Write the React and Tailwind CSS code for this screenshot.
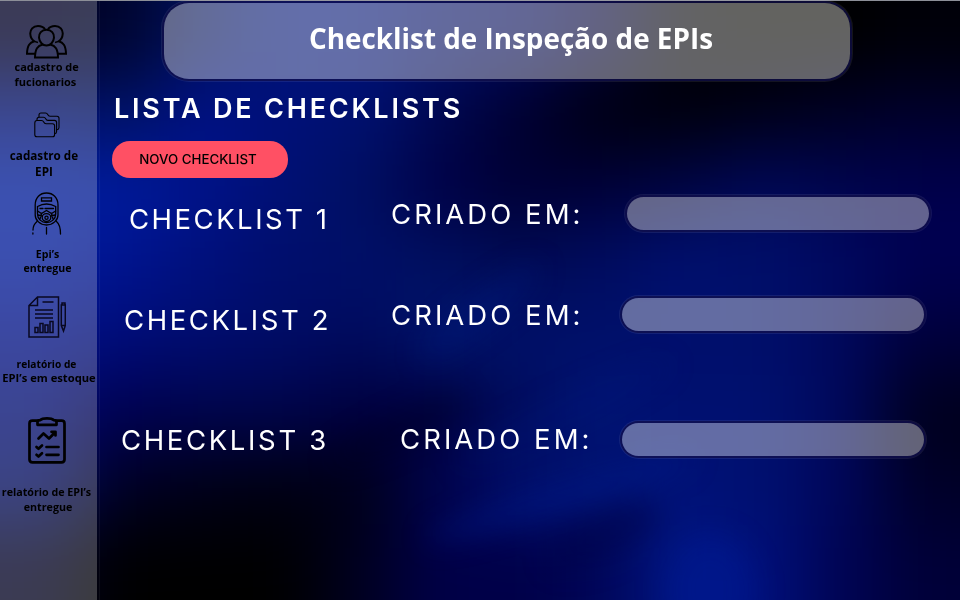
const MESH = [
  ["#000028", "#00052c", "#00105c", "#00137a", "#001278", "#000c66", "#00085c", "#00003c", "#000008", "#000000", "#000000", "#000008"],
  ["#001074", "#001264", "#001184", "#001078", "#001070", "#000850", "#000030", "#000010", "#00000c", "#000018", "#000024", "#00002c"],
  ["#001ea0", "#001b9c", "#00128a", "#001074", "#001062", "#000046", "#000034", "#000038", "#000444", "#000858", "#000550", "#00004c"],
  ["#001a9c", "#001490", "#00107c", "#000d6c", "#000f68", "#001060", "#000b54", "#000c60", "#001070", "#000f6a", "#000860", "#000050"],
  ["#001088", "#000c78", "#000c6e", "#000c66", "#000a5c", "#00146c", "#001068", "#00106a", "#000f6c", "#000f6a", "#00085c", "#00003c"],
  ["#000c74", "#000050", "#00044c", "#00044a", "#00003e", "#00003c", "#000c5c", "#001474", "#001070", "#001070", "#00085c", "#00001c"],
  ["#000c64", "#000024", "#000018", "#000012", "#000018", "#000450", "#001070", "#001270", "#001278", "#001070", "#00065a", "#000028"],
  ["#000024", "#000000", "#000000", "#000000", "#000020", "#000048", "#000048", "#000658", "#001684", "#00107c", "#000454", "#000038"],
];

function Backdrop() {
  return (
    <svg className="absolute inset-0 h-full w-full" viewBox="0 0 960 600" preserveAspectRatio="none" aria-hidden="true">
      <defs>
        <filter id="mesh" x="-20%" y="-20%" width="140%" height="140%" colorInterpolationFilters="sRGB">
          <feGaussianBlur stdDeviation="34" />
        </filter>
        <filter id="soft" x="-50%" y="-50%" width="200%" height="200%" colorInterpolationFilters="sRGB">
          <feGaussianBlur stdDeviation="14" />
        </filter>
      </defs>
      <g filter="url(#mesh)">
        {MESH.map((row, r) =>
          row.map((fill, c) => (
            <rect
              key={`${r}-${c}`}
              x={c === 0 ? -100 : c * 80}
              y={r === 0 ? -100 : r * 75}
              width={c === 0 ? 181 : c === 11 ? 180 : 81}
              height={r === 0 ? 176 : r === 7 ? 180 : 76}
              fill={fill}
            />
          ))
        )}
      </g>
      <g filter="url(#soft)">
        <ellipse cx="480" cy="312" rx="75" ry="14" transform="rotate(-38 480 312)" fill="#001c84" opacity="0.35" />
        <ellipse cx="560" cy="400" rx="120" ry="14" transform="rotate(-25 590 400)" fill="#001a80" opacity="0.2" />
        <ellipse cx="560" cy="498" rx="140" ry="12" transform="rotate(-17 560 498)" fill="#001a8c" opacity="0.5" />
        <ellipse cx="605" cy="535" rx="60" ry="22" transform="rotate(-25 605 535)" fill="#000040" opacity="0.4" />
        <ellipse cx="710" cy="590" rx="45" ry="55" fill="#001c98" opacity="0.4" />
        <ellipse cx="400" cy="430" rx="75" ry="13" transform="rotate(-25 400 430)" fill="#000018" opacity="0.3" />
      </g>
    </svg>
  );
}

function UsersIcon() {
  return (
    <svg className="mt-[24px] h-[34px] w-[41px] shrink-0" viewBox="0 0 41 34" fill="none" stroke="#000" strokeWidth="2">
      <path d="M19 4.300C17 1.300 13.800 1 12 1C7 1 4 4.500 4.300 9C4.500 12.500 6 14.800 8.300 16.300C4 17.600 1.200 20 1 28.800H9.500" />
      <path d="M22 4.300C24 1.300 27.200 1 29 1C34 1 37 4.500 36.700 9C36.500 12.500 35 14.800 32.700 16.300C37 17.600 39.800 20 40 28.800H31.500" />
      <path d="M20.500 4.800C15.500 4.800 12.700 8.300 13 12.700C13.400 17 16.500 20.500 20.500 20.500S27.600 17 28 12.700C28.300 8.300 25.500 4.800 20.500 4.800Z" />
      <path d="M16.800 19.500C11.500 20.800 9.200 24 9 32.500H32C31.800 24 29.500 20.800 24.200 19.500" />
      <path d="M8.300 16.300L12 17.500M32.700 16.300L29 17.500" strokeWidth="1.400" />
    </svg>
  );
}

function FoldersIcon() {
  return (
    <svg className="h-[26px] w-[26px] shrink-0" viewBox="0 0 26 26" fill="none" stroke="#000" strokeWidth="1.100" strokeLinejoin="round">
      <path d="M.8 11Q.8 8.500 3 8.500H7.500Q9 8.500 9.700 10Q10.500 11.700 12 11.700H18.500Q20.600 11.700 20.600 13.800V22.500Q20.600 24.800 18.500 24.800H3Q.8 24.800 .8 22.500Z" />
      <path d="M3 8.500V7.500Q3 5.200 5 5.200H9.500Q11 5.200 11.700 6.700Q12.500 8.400 14 8.400H20.500Q22.600 8.400 22.600 10.500V19.500Q22.600 21.500 20.600 21.800" />
      <path d="M5 5.200V3Q5 1 7 1H11.500Q13 1 13.700 2.500Q14.500 4.200 16 4.200H23Q25 4.200 25 6.300V15.500Q25 17.500 22.800 17.800" />
    </svg>
  );
}

function MaskIcon() {
  return (
    <svg className="h-[43px] w-[30px] shrink-0" viewBox="0 0 30 43" fill="none" stroke="#000" strokeWidth="1.300" strokeLinecap="round">
      <path d="M3.200 23V13C3.200 5.500 8 1 14.500 1S26 5.500 26 13V23C26 28 21 33 14.500 33S3.200 28 3.200 23Z" />
      <path d="M9.500 5.800H19.500V9H9.500Z" />
      <path d="M5.500 14.500Q14.500 9.500 23.700 14.500V22C23.700 27 19.500 30.500 14.500 30.500S5.500 27 5.500 22Z" />
      <path d="M8 16.500H11M13 16.500H21.500M5.500 19L9.500 21.500L14.500 18.500L19.500 21.500L23.700 19" />
      <path d="M9.500 21.500L8 27M19.500 21.500L21 27M10 24L6 23M19 24L23 23" />
      <ellipse cx="14.500" cy="25.500" rx="4.300" ry="3.800" />
      <circle cx="14.500" cy="25.700" r="1.600" />
      <path d="M5 29.500C2 32 1 35 1 38M.9 41V42M24.500 29.500C27.500 32 28.500 35 28.500 42M14.500 35.500V42" />
    </svg>
  );
}

function ReportIcon() {
  return (
    <svg className="h-[42px] w-[38px] shrink-0" viewBox="0 0 38 42" fill="none" stroke="#080820" strokeWidth="1.500">
      <path d="M9.500 1H30.500V41H1V9.500ZM9.500 1V9.500H1" />
      <path d="M14.500 6H25.500M7 14H25M7 18H25M7 22H25" />
      <path d="M7 31.500H10V36.500H7ZM12 27.500H15V36.500H12ZM17 29H20V36.500H17ZM22 25.500H25V36.500H22Z" />
      <path d="M34 9V7H37V9M33.300 9H37.300V29.500L35.500 35L33.300 29.500ZM33.300 29.500H37.300" />
    </svg>
  );
}

function ClipboardIcon() {
  return (
    <svg className="h-[47px] w-[38px] shrink-0" viewBox="0 0 38 47" fill="none" stroke="#000" strokeWidth="2.700" strokeLinecap="round" strokeLinejoin="round">
      <path d="M9.500 3.700H4.500Q1.500 3.700 1.500 6.500V42.500Q1.500 45.300 4.500 45.300H33.500Q36.500 45.300 36.500 42.500V6.500Q36.500 3.700 33.500 3.700H28.500" />
      <path d="M9.500 7.800V5Q9.500 3.500 12 3.200Q14 1.400 19 1.400T26 3.200Q28.500 3.500 28.500 5V7.800Z" />
      <path d="M10.500 21.500L15.500 16.500L21 21.500L27 15.500M23.500 14.800H27.500V18.500" />
      <path d="M8.500 30L10.500 31.800L14 28.500M18.500 30H30.500M8.500 37.800L10.500 39.600L14 36.300M18.500 37.800H30.500" />
    </svg>
  );
}

function Sidebar() {
  return (
    <nav className="flex w-[100px] shrink-0 flex-col items-start border-r border-white/5 font-['Open_Sans','Noto_Sans',sans-serif] text-[11px] font-bold text-black">
      <div className="flex h-full w-[97px] flex-col items-center bg-[#fffff4]/[0.23]">
        <div className="flex h-[100px] flex-col items-center pr-1">
          <UsersIcon />
          <p className="-mr-1 w-[68px] text-left text-[11px] leading-[15px] whitespace-nowrap">
            cadastro de
            <br />
            fucionarios
          </p>
        </div>
        <div className="flex h-[91px] flex-col items-center pt-[11px] pr-[9px]">
          <div className="pl-[7px]"><FoldersIcon /></div>
          <p className="mt-[9px] text-center text-[11.700px] leading-4 whitespace-nowrap">
            cadastro de
            <br />
            EPI
          </p>
        </div>
        <div className="flex h-[104px] flex-col items-center">
          <div className="pr-[2px]"><MaskIcon /></div>
          <p className="mt-[12px] pr-[2px] text-center text-[10.600px] leading-[14px]">
            Epi’s
            <br />
            entregue
          </p>
        </div>
        <div className="flex h-[122px] flex-col items-center">
          <div className="pr-[3px]"><ReportIcon /></div>
          <p className="mt-[19px] text-center whitespace-nowrap">
            <span className="block pr-[4px] text-[10.200px] leading-[14px]">relatório de</span>
            <span className="block pl-[1px] text-[11.200px] leading-[14px]">EPI’s em estoque</span>
          </p>
        </div>
        <div className="-mt-px flex flex-col items-center">
          <div className="pr-[4px]"><ClipboardIcon /></div>
          <p className="mt-[21px] text-center text-[10.700px] leading-[15px] whitespace-nowrap">
            <span className="block pr-[4px]">relatório de EPI’s</span>
            <span className="block pr-[1px]">entregue</span>
          </p>
        </div>
      </div>
    </nav>
  );
}

const GLASS = "bg-[#fffff8]/[0.39] shadow-[0_0_0_2px_rgba(10,8,70,0.7),0_0_0_3px_rgba(255,255,255,0.08)]";

function ChecklistRow({ name, nameClass, label, labelClass, className }) {
  return (
    <div className={`flex items-start text-[27.500px] leading-[34px] font-normal text-white ${className}`}>
      <span className={`shrink-0 whitespace-nowrap ${nameClass}`}>{name}</span>
      <span className={`shrink-0 whitespace-nowrap ${labelClass}`}>{label}</span>
      <div className={`h-[33px] w-[302px] shrink-0 rounded-full ${GLASS}`} />
    </div>
  );
}

export default function App() {
  return (
    <div className="relative h-[600px] w-[960px] overflow-hidden bg-black">
      <Backdrop />
      <div className="relative flex h-full border-t border-[#8c8f98]">
        <Sidebar />
        <main className="flex min-w-0 flex-1 flex-col font-['Inter',sans-serif]">
          <header className={`mt-[2px] ml-[64px] flex h-[76px] w-[686px] shrink-0 items-center justify-center rounded-[25px] pb-[4px] ${GLASS}`}>
            <h1 className="pl-[8px] font-['Open_Sans','Noto_Sans',sans-serif] text-[27.850px] font-bold whitespace-nowrap text-white">
              Checklist de Inspeção de EPIs
            </h1>
          </header>
          <h2 className="mt-[13px] ml-[14px] text-[27px] leading-[34px] font-semibold tracking-[2.800px] whitespace-nowrap text-white">
            LISTA DE CHECKLISTS
          </h2>
          <button className="mt-[15px] ml-[12px] flex h-[37px] w-[176px] shrink-0 items-center justify-center rounded-[18px] bg-[#ff5064] pr-[4px] text-[13.300px] font-medium whitespace-nowrap text-black">
            NOVO CHECKLIST
          </button>
          <ChecklistRow className="mt-[19px] h-[101px]" name="CHECKLIST 1" nameClass="mt-[5px] w-[262px] pl-[29px] tracking-[2.500px]" label="CRIADO EM:" labelClass="w-[265px] pl-[29px] tracking-[3.050px]" />
          <ChecklistRow className="h-[125px]" name="CHECKLIST 2" nameClass="mt-[5px] w-[262px] pl-[24px] tracking-[2.600px]" label="CRIADO EM:" labelClass="w-[260px] pl-[29px] tracking-[3.050px]" />
          <ChecklistRow className="h-[40px]" name="CHECKLIST 3" nameClass="w-[262px] pl-[21px] tracking-[2.650px]" label="CRIADO EM:" labelClass="-mt-px w-[260px] pl-[38px] tracking-[3.050px]" />
        </main>
      </div>
    </div>
  );
}
